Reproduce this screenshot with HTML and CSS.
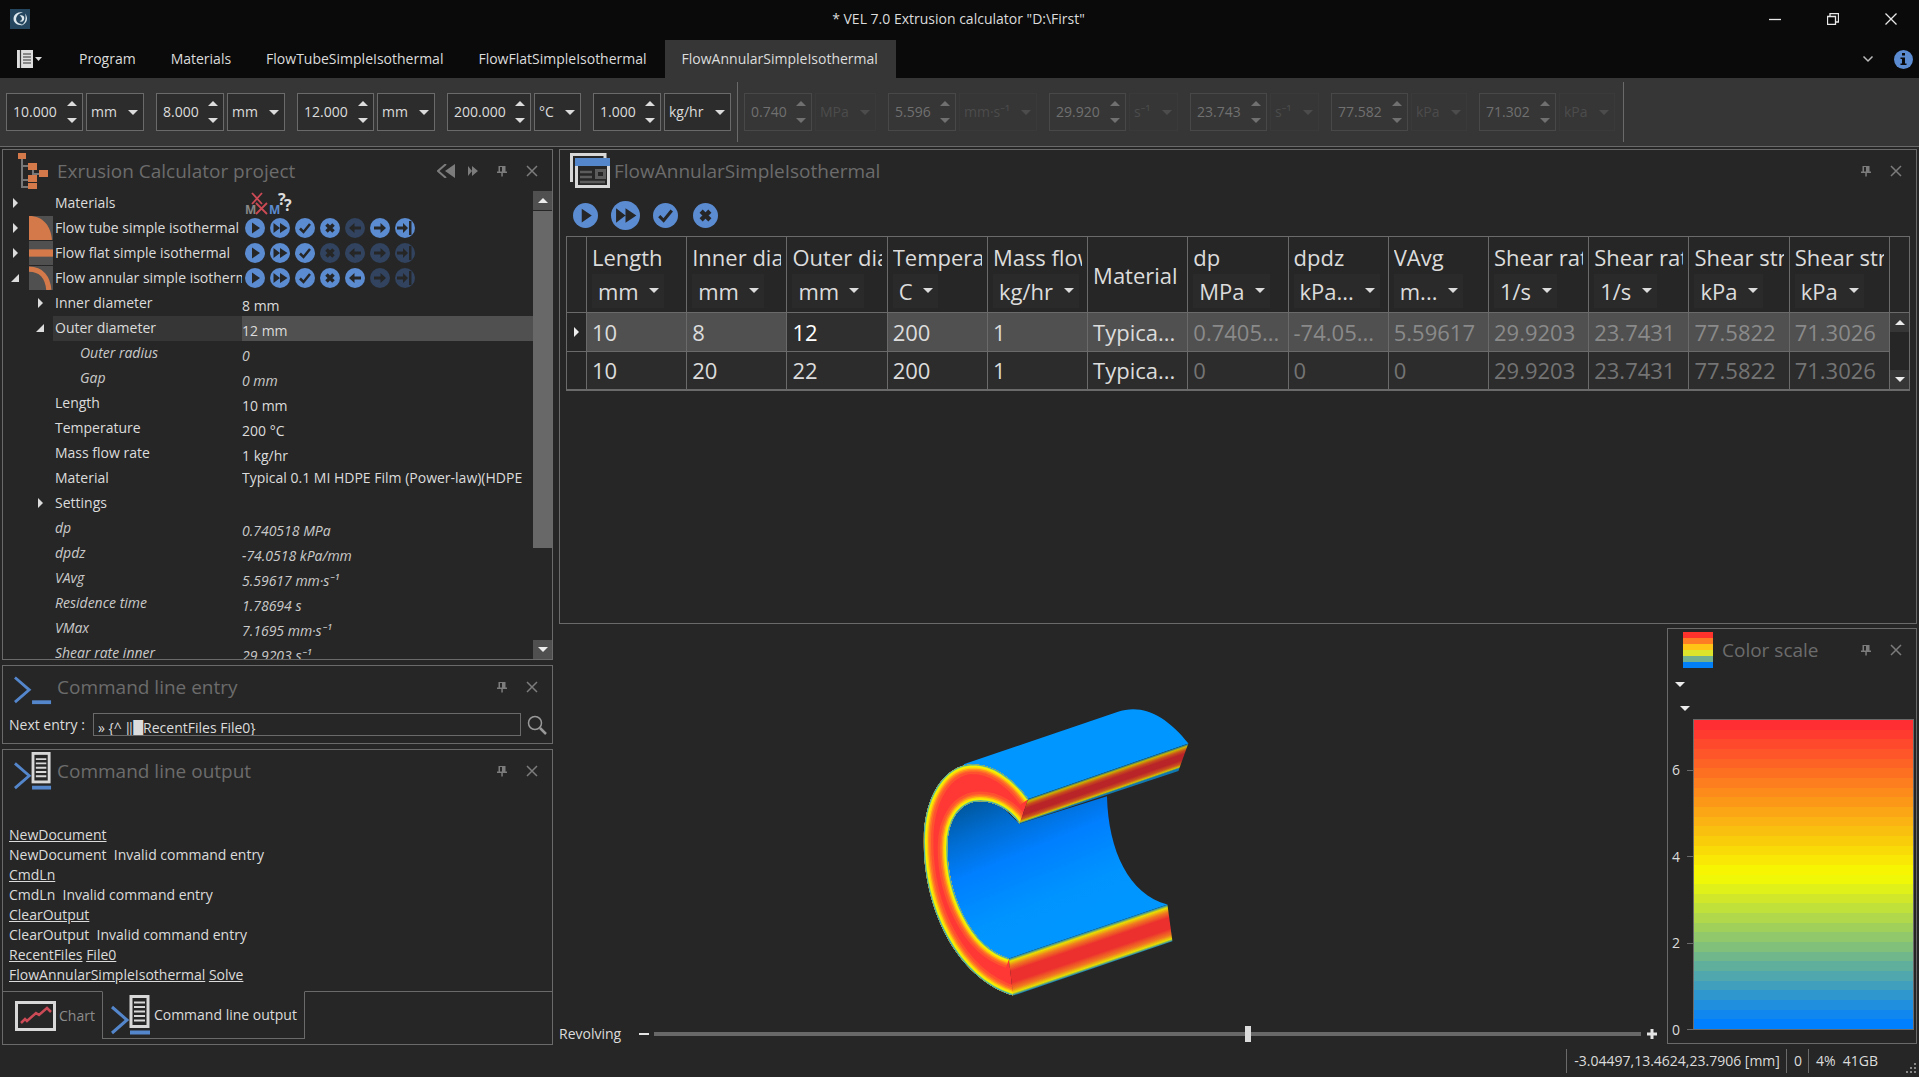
FILE: index.html
```html
<!DOCTYPE html>
<html lang="en">
<head>
  <meta charset="UTF-8">
  <meta name="viewport" content="width=device-width, initial-scale=1.0">
  <title>VEL 7.0 Extrusion calculator</title>
  <link rel="stylesheet" href="styles.css">
</head>
<body>
  <!-- Shared icons -->
  <svg class="defs" width="0" height="0">
    <symbol id="i-play" viewBox="0 0 20 20"><circle cx="10" cy="10" r="10"/><path class="ink" d="M7 4.500l8 5.500-8 5.500z"/></symbol>
    <symbol id="i-ff" viewBox="0 0 20 20"><circle cx="10" cy="10" r="10"/><path class="ink" d="M3.500 5l6.500 5-6.500 5zM10 5l7.500 5-7.500 5z"/></symbol>
    <symbol id="i-check" viewBox="0 0 20 20"><circle cx="10" cy="10" r="10"/><path class="pen" d="M5 10.500l3.500 3.500 6.500-8"/></symbol>
    <symbol id="i-cross" viewBox="0 0 20 20"><circle cx="10" cy="10" r="10"/><path class="pen wide" d="M6.500 6.500l7 7M13.500 6.500l-7 7"/></symbol>
    <symbol id="i-left" viewBox="0 0 20 20"><circle cx="10" cy="10" r="10"/><path class="ink" d="M4 10l5.500-5v3.500H16v3H9.500V15z"/></symbol>
    <symbol id="i-right" viewBox="0 0 20 20"><circle cx="10" cy="10" r="10"/><path class="ink" d="M16 10l-5.500-5v3.500H4v3h6.500V15z"/></symbol>
    <symbol id="i-end" viewBox="0 0 20 20"><circle cx="10" cy="10" r="10"/><path class="ink" d="M13 10L8 5v3.500H2v3h6V15zM14 3h2.500v14H14z"/></symbol>
    <symbol id="i-pin" viewBox="0 0 12 12"><path d="M2.500 1h7v5.500h1.500V8H6.800v3.500H5.300V8H1V6.500h1.500zM4 2v4.500h2V2z" fill-rule="evenodd"/></symbol>
    <symbol id="i-close" viewBox="0 0 12 12"><path d="M1 1l10 10M11 1L1 11" fill="none" stroke="currentColor" stroke-width="1.500"/></symbol>
    <symbol id="i-output" viewBox="0 0 40 40">
      <path d="M1 12l15 13L1 38" fill="none" stroke="#5486cc" stroke-width="3"/>
      <rect x="20" y="1.500" width="17" height="30" fill="none" stroke="#d8d8d8" stroke-width="3"/>
      <path d="M23 7.500h11M23 12h11M23 16.500h11M23 21h11M23 25.500h11" stroke="#d8d8d8" stroke-width="2"/>
      <path d="M19 37.500h20" stroke="#5486cc" stroke-width="4"/>
    </symbol>
  </svg>

  <header class="titlebar">
    <svg class="app-icon" viewBox="0 0 20 20">
      <rect width="20" height="20" fill="#24465e"/>
      <path d="M13 3.500C6 1.500 1.500 8 4.500 13c2 3 6 4 8 2-5 .5-8-4-5.500-8 1-2 3-3 6-3.500z" fill="#dce8ee"/>
      <path d="M15 4.500c4 4.500 2 11-5 12.500 5.500-2.500 6.500-7.500 5-12.500zM9.500 6.500c4-1.500 6 2 4 5-1 1.500-3 1.500-4 .5 3 0 3.500-3.500 0-5.500z" fill="#dce8ee"/>
    </svg>
    <h1>* VEL 7.0 Extrusion calculator "D:\First"</h1>
    <div class="window-buttons">
      <button type="button" aria-label="Minimize"><svg viewBox="0 0 12 12"><path d="M0 6.500h12"/></svg></button>
      <button type="button" aria-label="Restore"><svg viewBox="0 0 12 12"><path d="M.5 3.500h8v8h-8zM3 3V.500h8.500V9H9"/></svg></button>
      <button type="button" aria-label="Close"><svg viewBox="0 0 12 12"><path d="M.5.500l11 11M11.500.500l-11 11"/></svg></button>
    </div>
  </header>

  <nav class="tabs">
    <button type="button" class="file-menu" aria-label="File">
      <svg width="26" height="18" viewBox="0 0 26 18"><path d="M0 0h16v18H0z" fill="#ddd"/><path d="M3.500 0v18M6 4h8M6 7h8M6 10h8M6 13h8" stroke="#333" stroke-width="1.200"/><path d="M18 7h7l-3.500 4z" fill="#ddd"/></svg>
    </button>
    <a href="#">Program</a>
    <a href="#">Materials</a>
    <a href="#">FlowTubeSimpleIsothermal</a>
    <a href="#">FlowFlatSimpleIsothermal</a>
    <a href="#" class="active">FlowAnnularSimpleIsothermal</a>
    <div class="tabs-end">
      <svg width="12" height="8" viewBox="0 0 12 8"><path d="M1.500 1.500L6 6l4.500-4.500" fill="none" stroke="#bbb" stroke-width="1.500"/></svg>
      <svg width="19" height="19" viewBox="0 0 19 19"><circle cx="9.500" cy="9.500" r="9.500" fill="#5b8bd0"/><path d="M8 3h3v2.500H8zM6.500 7.500H11v6h1.500V15h-6v-1.500H8V9H6.500z" fill="#0a0a0a"/></svg>
    </div>
  </nav>

  <div class="toolbar">
    <div class="tool-group">
      <div class="field"><span class="spin"><input type="text" value="10.000" aria-label="Length"><i></i></span><span class="unit"><select aria-label="Length unit"><option>mm</option></select></span></div>
      <div class="field"><span class="spin short"><input type="text" value="8.000" aria-label="Inner diameter"><i></i></span><span class="unit"><select aria-label="Inner diameter unit"><option>mm</option></select></span></div>
      <div class="field"><span class="spin"><input type="text" value="12.000" aria-label="Outer diameter"><i></i></span><span class="unit"><select aria-label="Outer diameter unit"><option>mm</option></select></span></div>
      <div class="field"><span class="spin long"><input type="text" value="200.000" aria-label="Temperature"><i></i></span><span class="unit"><select aria-label="Temperature unit"><option>°C</option></select></span></div>
      <div class="field"><span class="spin short"><input type="text" value="1.000" aria-label="Mass flow rate"><i></i></span><span class="unit"><select aria-label="Mass flow rate unit"><option>kg/hr</option></select></span></div>
    </div>
    <div class="tool-group results">
      <div class="field"><span class="spin short"><input type="text" value="0.740" aria-label="dp" disabled><i></i></span><span class="unit"><select aria-label="dp unit" disabled><option>MPa</option></select></span></div>
      <div class="field"><span class="spin short"><input type="text" value="5.596" aria-label="VAvg" disabled><i></i></span><span class="unit"><select aria-label="VAvg unit" disabled><option>mm·s⁻¹</option></select></span></div>
      <div class="field"><span class="spin"><input type="text" value="29.920" aria-label="Shear rate inner" disabled><i></i></span><span class="unit"><select aria-label="Shear rate inner unit" disabled><option>s⁻¹</option></select></span></div>
      <div class="field"><span class="spin"><input type="text" value="23.743" aria-label="Shear rate outer" disabled><i></i></span><span class="unit"><select aria-label="Shear rate outer unit" disabled><option>s⁻¹</option></select></span></div>
      <div class="field"><span class="spin"><input type="text" value="77.582" aria-label="Shear stress inner" disabled><i></i></span><span class="unit"><select aria-label="Shear stress inner unit" disabled><option>kPa</option></select></span></div>
      <div class="field"><span class="spin"><input type="text" value="71.302" aria-label="Shear stress outer" disabled><i></i></span><span class="unit"><select aria-label="Shear stress outer unit" disabled><option>kPa</option></select></span></div>
    </div>
  </div>

  <main class="workspace">
    <div class="left">
      <section class="panel project">
        <div class="panel-head">
          <svg class="head-icon" viewBox="0 0 40 38">
            <path d="M9 7v28h10M9 14h9M9 28h9M20 15v7h12" fill="none" stroke="#777" stroke-width="2"/>
            <path d="M5 1h8v6H5zM15 11h9v7h-9zM26 18h9v7h-9zM15 23h9v7h-9zM15 31h9v6h-9z" fill="#d47a4a"/>
          </svg>
          <h2>Exrusion Calculator project</h2>
          <svg class="skip" width="18" height="14" viewBox="0 0 18 14"><path d="M18 0v14L8 7z"/><path d="M9 0L1 7l8 7" fill="none" stroke="currentColor" stroke-width="2"/></svg>
          <svg class="skip next" width="10" height="10" viewBox="0 0 10 10"><path d="M0 0l4 5-4 5zM4 0l6 5-6 5z"/></svg>
          <button type="button" aria-label="Pin"><svg><use href="#i-pin"/></svg></button>
          <button type="button" aria-label="Close"><svg><use href="#i-close"/></svg></button>
        </div>
        <div class="tree-wrap">
          <div class="tree">
            <div class="row closed"><span>Materials</span>
              <b class="actions"><svg class="marks" width="50" height="25" viewBox="0 0 50 25">
                <text x="0" y="23" fill="#888" class="letter">M</text><path d="M7 2l10 11M17 2L7 13M11 12l11 11M22 12L11 23" stroke="#cc4a55" stroke-width="1.800"/>
                <text x="24" y="23" fill="#5b8bd0" class="letter">M</text><text x="33" y="14" fill="#ddd" class="query">?</text><text x="39" y="20" fill="#ddd" class="query">?</text>
              </svg></b></div>
            <div class="row closed"><svg class="thumb" viewBox="0 0 23 23"><rect width="23" height="23" fill="#505050"/><path d="M0 0c14 0 21 10 22 23H0z" fill="#d47a4a"/></svg><span>Flow tube simple isothermal</span>
              <b class="actions"><button aria-label="Solve"><svg><use href="#i-play"/></svg></button><button aria-label="Solve all"><svg><use href="#i-ff"/></svg></button><button aria-label="Accept"><svg><use href="#i-check"/></svg></button><button aria-label="Remove"><svg><use href="#i-cross"/></svg></button><button aria-label="Previous" disabled><svg><use href="#i-left"/></svg></button><button aria-label="Next"><svg><use href="#i-right"/></svg></button><button aria-label="Last"><svg><use href="#i-end"/></svg></button></b></div>
            <div class="row closed"><svg class="thumb" viewBox="0 0 23 23"><rect width="23" height="23" fill="#505050"/><path d="M0 8h23v7H0z" fill="#d47a4a"/></svg><span>Flow flat simple isothermal</span>
              <b class="actions"><button aria-label="Solve"><svg><use href="#i-play"/></svg></button><button aria-label="Solve all"><svg><use href="#i-ff"/></svg></button><button aria-label="Accept"><svg><use href="#i-check"/></svg></button><button aria-label="Remove" disabled><svg><use href="#i-cross"/></svg></button><button aria-label="Previous" disabled><svg><use href="#i-left"/></svg></button><button aria-label="Next" disabled><svg><use href="#i-right"/></svg></button><button aria-label="Last" disabled><svg><use href="#i-end"/></svg></button></b></div>
            <div class="row open"><svg class="thumb" viewBox="0 0 23 23"><rect width="23" height="23" fill="#505050"/><path d="M0 3c12 0 18 8 19 20" fill="none" stroke="#d47a4a" stroke-width="5"/></svg><span>Flow annular simple isothermal</span>
              <b class="actions"><button aria-label="Solve"><svg><use href="#i-play"/></svg></button><button aria-label="Solve all"><svg><use href="#i-ff"/></svg></button><button aria-label="Accept"><svg><use href="#i-check"/></svg></button><button aria-label="Remove"><svg><use href="#i-cross"/></svg></button><button aria-label="Previous"><svg><use href="#i-left"/></svg></button><button aria-label="Next" disabled><svg><use href="#i-right"/></svg></button><button aria-label="Last" disabled><svg><use href="#i-end"/></svg></button></b></div>
            <div class="row closed level1"><span>Inner diameter</span><b>8 mm</b></div>
            <div class="row open level1 selected"><span>Outer diameter</span><b>12 mm</b></div>
            <div class="row level2 calc"><span>Outer radius</span><b>0</b></div>
            <div class="row level2 calc"><span>Gap</span><b>0 mm</b></div>
            <div class="row"><span>Length</span><b>10 mm</b></div>
            <div class="row"><span>Temperature</span><b>200 °C</b></div>
            <div class="row"><span>Mass flow rate</span><b>1 kg/hr</b></div>
            <div class="row"><span>Material</span><b class="plain">Typical 0.1 MI HDPE Film (Power-law)(HDPE</b></div>
            <div class="row closed level1"><span>Settings</span></div>
            <div class="row calc"><span>dp</span><b>0.740518 MPa</b></div>
            <div class="row calc"><span>dpdz</span><b>-74.0518 kPa/mm</b></div>
            <div class="row calc"><span>VAvg</span><b>5.59617 mm·s⁻¹</b></div>
            <div class="row calc"><span>Residence time</span><b>1.78694 s</b></div>
            <div class="row calc"><span>VMax</span><b>7.1695 mm·s⁻¹</b></div>
            <div class="row calc"><span>Shear rate inner</span><b>29.9203 s⁻¹</b></div>
          </div>
          <div class="scrollbar">
            <button type="button" class="up" aria-label="Scroll up"></button>
            <div class="scroll-thumb"></div>
            <button type="button" class="down" aria-label="Scroll down"></button>
          </div>
        </div>
      </section>

      <section class="panel entry">
        <div class="panel-head">
          <svg class="head-icon" viewBox="0 0 40 40"><path d="M1 10l15 13L1 36" fill="none" stroke="#5486cc" stroke-width="3"/><path d="M19 36h20" stroke="#5486cc" stroke-width="4"/></svg>
          <h2>Command line entry</h2>
          <button type="button" aria-label="Pin"><svg><use href="#i-pin"/></svg></button>
          <button type="button" aria-label="Close"><svg><use href="#i-close"/></svg></button>
        </div>
        <form class="entry-form">
          <label for="nextEntry">Next entry :</label>
          <input type="text" id="nextEntry" value="» {^ ‖█RecentFiles File0}">
          <button type="button" aria-label="Search"><svg width="20" height="20" viewBox="0 0 20 20"><circle cx="8" cy="8" r="6.500" fill="none" stroke="#999" stroke-width="1.500"/><path d="M13 13l6 6" stroke="#999" stroke-width="2.500"/></svg></button>
        </form>
      </section>

      <section class="panel output">
        <div class="panel-head">
          <svg class="head-icon" viewBox="0 0 40 40"><use href="#i-output"/></svg>
          <h2>Command line output</h2>
          <button type="button" aria-label="Pin"><svg><use href="#i-pin"/></svg></button>
          <button type="button" aria-label="Close"><svg><use href="#i-close"/></svg></button>
        </div>
        <div class="log">
          <p><a href="#">NewDocument</a></p>
          <p>NewDocument&nbsp; Invalid command entry</p>
          <p><a href="#">CmdLn</a></p>
          <p>CmdLn&nbsp; Invalid command entry</p>
          <p><a href="#">ClearOutput</a></p>
          <p>ClearOutput&nbsp; Invalid command entry</p>
          <p><a href="#">RecentFiles</a> <a href="#">File0</a></p>
          <p><a href="#">FlowAnnularSimpleIsothermal</a> <a href="#">Solve</a></p>
        </div>
        <div class="dock-tabs">
          <button type="button" class="dock-tab">
            <svg width="41" height="30" viewBox="0 0 41 30"><rect x="1.500" y="1.500" width="38" height="27" fill="none" stroke="#d8d8d8" stroke-width="3"/><path d="M6 22l4-4 2 2 9-8 3 2 8-7 4 4" fill="none" stroke="#cc4a55" stroke-width="2.500"/></svg>
            Chart
          </button>
          <button type="button" class="dock-tab active">
            <svg width="40" height="40"><use href="#i-output"/></svg>
            Command line output
          </button>
          <div class="dock-rest"></div>
        </div>
      </section>
    </div>

    <div class="right">
      <section class="panel flow">
        <div class="panel-head">
          <svg class="head-icon" viewBox="0 0 40 36">
            <path d="M1.500 29V1.500H35V6" fill="none" stroke="#d8d8d8" stroke-width="3"/>
            <path d="M6.500 8v25.500h32V8" fill="none" stroke="#d8d8d8" stroke-width="3"/>
            <path d="M5 5h35v8H5z" fill="#5486cc"/>
            <path d="M10 19h12M10 24h12M10 29h25" stroke="#5c5c5c" stroke-width="2.500"/><rect x="26.500" y="17.500" width="8" height="7" fill="none" stroke="#5c5c5c" stroke-width="3"/>
          </svg>
          <h2>FlowAnnularSimpleIsothermal</h2>
          <button type="button" aria-label="Pin"><svg><use href="#i-pin"/></svg></button>
          <button type="button" aria-label="Close"><svg><use href="#i-close"/></svg></button>
        </div>
        <div class="flow-actions">
          <button aria-label="Solve"><svg><use href="#i-play"/></svg></button>
          <button class="big" aria-label="Solve all"><svg><use href="#i-ff"/></svg></button>
          <button aria-label="Accept"><svg><use href="#i-check"/></svg></button>
          <button aria-label="Remove"><svg><use href="#i-cross"/></svg></button>
        </div>
        <table>
          <colgroup><col class="marker-col"><col span="13"><col class="scroll-col"></colgroup>
          <thead>
            <tr>
              <th></th>
              <th><span>Length</span><div class="unit"><select aria-label="Unit"><option>mm</option></select></div></th>
              <th><span>Inner diameter</span><div class="unit"><select aria-label="Unit"><option>mm</option></select></div></th>
              <th><span>Outer diameter</span><div class="unit"><select aria-label="Unit"><option>mm</option></select></div></th>
              <th><span>Temperature</span><div class="unit"><select aria-label="Unit"><option>C</option></select></div></th>
              <th><span>Mass flow rate</span><div class="unit"><select aria-label="Unit"><option>kg/hr</option></select></div></th>
              <th><span>Material</span></th>
              <th><span>dp</span><div class="unit"><select aria-label="Unit"><option>MPa</option></select></div></th>
              <th><span>dpdz</span><div class="unit"><select aria-label="Unit"><option>kPa...</option></select></div></th>
              <th><span>VAvg</span><div class="unit"><select aria-label="Unit"><option>m...</option></select></div></th>
              <th><span>Shear rate inner</span><div class="unit"><select aria-label="Unit"><option>1/s</option></select></div></th>
              <th><span>Shear rate outer</span><div class="unit"><select aria-label="Unit"><option>1/s</option></select></div></th>
              <th><span>Shear stress inner</span><div class="unit"><select aria-label="Unit"><option>kPa</option></select></div></th>
              <th><span>Shear stress outer</span><div class="unit"><select aria-label="Unit"><option>kPa</option></select></div></th>
              <th></th>
            </tr>
          </thead>
          <tbody>
            <tr class="current">
              <td class="marker"></td><td>10</td><td>8</td><td class="editing">12</td><td>200</td><td>1</td><td>Typica...</td>
              <td class="ro">0.7405...</td><td class="ro">-74.05...</td><td class="ro">5.59617</td><td class="ro">29.9203</td><td class="ro">23.7431</td><td class="ro">77.5822</td><td class="ro">71.3026</td>
              <td class="table-scroll" rowspan="2"><div><button type="button" class="up" aria-label="Scroll up"></button><button type="button" class="down" aria-label="Scroll down"></button></div></td>
            </tr>
            <tr>
              <td class="marker"></td><td>10</td><td>20</td><td>22</td><td>200</td><td>1</td><td>Typica...</td>
              <td class="ro">0</td><td class="ro">0</td><td class="ro">0</td><td class="ro">29.9203</td><td class="ro">23.7431</td><td class="ro">77.5822</td><td class="ro">71.3026</td>
            </tr>
          </tbody>
        </table>
      </section>

      <div class="view-row">
        <section class="viewport">
          <svg class="scene" viewBox="0 0 1100 384">
            <defs>
              <linearGradient id="bore" gradientUnits="userSpaceOnUse" x1="230" y1="330" x2="400" y2="740">
                <stop offset="0" stop-color="#0058a0"/><stop offset=".2" stop-color="#006cd0"/><stop offset=".45" stop-color="#007fff"/><stop offset=".8" stop-color="#0094ff"/><stop offset="1" stop-color="#0096ff"/>
              </linearGradient>
              <linearGradient id="cutTop" gradientUnits="userSpaceOnUse" x1="388" y1="324" x2="408" y2="382">
                <stop offset="0" stop-color="#0a6ca0"/><stop offset=".1" stop-color="#c8b400"/><stop offset=".25" stop-color="#c84c1c"/><stop offset=".4" stop-color="#b82428"/><stop offset=".65" stop-color="#b82428"/><stop offset=".82" stop-color="#cc541c"/><stop offset=".93" stop-color="#d0c000"/><stop offset="1" stop-color="#1078b0"/>
              </linearGradient>
              <linearGradient id="cutBottom" gradientUnits="userSpaceOnUse" x1="330" y1="802" x2="365" y2="905">
                <stop offset="0" stop-color="#1080c0"/><stop offset=".08" stop-color="#e8e000"/><stop offset=".2" stop-color="#f07820"/><stop offset=".35" stop-color="#ec302e"/><stop offset=".65" stop-color="#ec302e"/><stop offset=".82" stop-color="#f07820"/><stop offset=".93" stop-color="#e8e000"/><stop offset="1" stop-color="#1080c0"/>
              </linearGradient>
              <clipPath id="ringClip"><path d="M388 324C340 258 280 220 222 220C135 222 75 320 75 450C75 650 170 858 343 913L330 802C210 765 146 600 146 470C146 385 185 331 245 331C290 331 335 358 362 398Z"/></clipPath>
              <g id="rim">
                <path d="M388 324C340 258 280 220 222 220C135 222 75 320 75 450C75 650 170 858 343 913"/>
                <path d="M330 802C210 765 146 600 146 470C146 385 185 331 245 331C290 331 335 358 362 398"/>
              </g>
            </defs>
            <g transform="translate(339 57) scale(.3333)">
              <path d="M195 220L655 64C730 38 800 74 868 158L388 324L250 300Z" fill="#0096ff"/>
              <path d="M362 398L624 316C628 480 690 610 805 640L330 802L200 760L120 500L180 320L270 310Z" fill="url(#bore)"/>
              <g clip-path="url(#ringClip)" fill="none">
                <rect width="500" height="960" fill="#ff3835"/>
                <use href="#rim" stroke="#ff5030" stroke-width="58"/>
                <use href="#rim" stroke="#ff6e28" stroke-width="44"/>
                <use href="#rim" stroke="#ff961c" stroke-width="34"/>
                <use href="#rim" stroke="#ffcc08" stroke-width="26"/>
                <use href="#rim" stroke="#f4f000" stroke-width="18"/>
                <use href="#rim" stroke="#80cc70" stroke-width="8"/>
                <use href="#rim" stroke="#1890e0" stroke-width="3"/>
              </g>
              <path d="M388 324L868 158L864 168L838 240L362 398Z" fill="url(#cutTop)"/>
              <path d="M330 802L805 640L820 750L343 913Z" fill="url(#cutBottom)"/>
            </g>
          </svg>
          <div class="revolve">
            <label for="revolving">Revolving</label>
            <span class="minus"></span>
            <input type="range" id="revolving" min="0" max="1000" value="602">
            <span class="plus"></span>
          </div>
        </section>

        <section class="panel scale">
          <div class="panel-head">
            <svg class="head-icon" viewBox="0 0 30 36"><path d="M0 0h30v6H0z" fill="#ff332c"/><path d="M0 6h30v6H0z" fill="#fd7c24"/><path d="M0 12h30v6H0z" fill="#ffc416"/><path d="M0 18h30v6H0z" fill="#dce42c"/><path d="M0 24h30v6H0z" fill="#70b090"/><path d="M0 30h30v6H0z" fill="#007ff8"/></svg>
            <h2>Color scale</h2>
            <button type="button" aria-label="Pin"><svg><use href="#i-pin"/></svg></button>
            <button type="button" aria-label="Close"><svg><use href="#i-close"/></svg></button>
          </div>
          <div class="scale-menus"><button type="button" class="down" aria-label="Field"></button><button type="button" class="down" aria-label="Unit"></button></div>
          <div class="scale-body">
            <div class="ticks"><span>6</span><span>4</span><span>2</span><span>0</span></div>
            <div class="bands" id="bands"></div>
          </div>
        </section>
      </div>
    </div>
  </main>

  <footer class="status">
    <span>-3.04497,13.4624,23.7906 [mm]</span>
    <span>0</span>
    <span>4%&nbsp; 41GB</span>
    <svg class="grip" width="10" height="10" viewBox="0 0 10 10"><path d="M8 0h2v2H8zM4 4h2v2H4zM8 4h2v2H8zM0 8h2v2H0zM4 8h2v2H4zM8 8h2v2H8z" fill="#888"/></svg>
  </footer>

  <script>
    // Color bands, red (max) to yellow to blue (0)
    const stops = [[255, 46, 50], [248, 252, 0], [0, 127, 255]];
    const count = 32;
    const bands = document.getElementById('bands');
    for (let i = 0; i < count; i++) {
      const t = i / (count - 1) * 2;
      const k = Math.min(Math.floor(t), 1);
      const rgb = stops[k].map((c, n) => Math.round(c + (stops[k + 1][n] - c) * (t - k)));
      const band = document.createElement('div');
      band.style.backgroundColor = `rgb(${rgb.join(',')})`;
      bands.appendChild(band);
    }
  </script>
</body>
</html>
```

FILE: styles.css
```css
* {
  box-sizing: border-box;
}

body {
  margin: 0;
  height: 100vh;
  display: flex;
  flex-direction: column;
  overflow: hidden;
  background-color: #262626;
  color: #dcdcdc;
  font-family: "Open Sans", "Noto Sans", sans-serif;
  font-size: 14px;
  line-height: 20px;
}

button,
input,
select {
  font: inherit;
  color: inherit;
  margin: 0;
  padding: 0;
  border: none;
  background: none;
}

select {
  appearance: none;
}

h1,
h2,
p {
  margin: 0;
  font-weight: normal;
}

svg {
  display: block;
  flex: none;
}

.defs {
  position: absolute;
}

.ink {
  fill: #262626;
}

.pen {
  fill: none;
  stroke: #262626;
  stroke-width: 2.5;
}

.wide {
  stroke-width: 3.5;
}

/* Title bar */
.titlebar {
  display: grid;
  grid-template-columns: 1fr auto 1fr;
  align-items: center;
  height: 40px;
  padding: 0 12px 3px 10px;
  background-color: #0a0a0a;
}

.titlebar h1 {
  font-size: 14px;
}

.app-icon {
  width: 20px;
  height: 20px;
}

.window-buttons {
  display: flex;
  justify-content: flex-end;
  gap: 46px;
  padding-right: 10px;
}

.window-buttons svg {
  width: 12px;
  height: 12px;
  fill: none;
  stroke: #e8e8e8;
  stroke-width: 1.3;
}

/* Ribbon tabs */
.tabs {
  display: flex;
  height: 38px;
  background-color: #0a0a0a;
}

.tabs a {
  padding: 9px 18px 9px 17px;
  color: #dcdcdc;
  text-decoration: none;
}

.tabs a.active {
  background-color: #363636;
}

.file-menu {
  width: 62px;
  padding-left: 17px;
}

.tabs-end {
  display: flex;
  align-items: center;
  gap: 20px;
  margin-left: auto;
  padding-right: 6px;
}

/* Ribbon fields */
.toolbar {
  display: flex;
  height: 69px;
  padding: 4px 0;
  background-color: #363636;
  border-bottom: 1px solid #6a6a6a;
}

.tool-group {
  display: flex;
  align-items: flex-start;
  gap: 12px;
  padding: 11px 6px 0;
  border-right: 1px solid #6a6a6a;
}

.tool-group.results {
  padding-right: 8px;
  color: #707070;
}

.field {
  display: flex;
  gap: 3px;
}

.field .spin,
.field .unit {
  height: 38px;
  border: 1px solid #6a6a6a;
  background-color: #2c2c2c;
}

.spin {
  display: flex;
  align-items: center;
  width: 77px;
  padding: 0 5px 0 6px;
}

.spin.short {
  width: 68px;
}

.spin.long {
  width: 84px;
}

.spin input {
  flex: 1;
  min-width: 0;
}

.spin i {
  display: flex;
  flex-direction: column;
  gap: 12px;
}

.spin i::before,
.spin i::after {
  content: "";
  border: 5px solid transparent;
  border-top-width: 0;
  border-bottom-color: #dcdcdc;
}

.spin i::after {
  border-width: 5px 5px 0;
  border-top-color: #dcdcdc;
}

.unit {
  position: relative;
}

.unit::after {
  content: "";
  position: absolute;
  right: 5px;
  top: 16px;
  border: 5px solid transparent;
  border-bottom-width: 0;
  border-top-color: #dcdcdc;
  pointer-events: none;
}

.field .unit select {
  height: 36px;
  padding: 0 26px 0 4px;
}

.results .spin {
  border-color: #484848;
  background-color: #363636;
}

.results .unit {
  border-color: #3a3a3a;
  background-color: #363636;
}

.results input,
.results select {
  opacity: 1;
}

.results select {
  color: #4c4c4c;
}

.results .spin i::before {
  border-bottom-color: #707070;
}

.results .spin i::after {
  border-top-color: #707070;
}

.results .unit::after {
  border-top-color: #4c4c4c;
}

/* Panels */
.workspace {
  flex: 1;
  min-height: 0;
  display: grid;
  grid-template-columns: 551px minmax(0, 1fr);
  gap: 6px;
  padding: 2px 2px 0;
}

.left {
  display: flex;
  flex-direction: column;
  gap: 5px;
  min-height: 0;
}

.right {
  display: flex;
  flex-direction: column;
  gap: 4px;
  min-width: 0;
}

.panel {
  border: 1px solid #6a6a6a;
}

.panel-head {
  display: flex;
  align-items: center;
  height: 41px;
  padding: 0 14px 0 10px;
  color: #7c7c7c;
  fill: #7c7c7c;
}

.panel-head h2 {
  flex: 1;
  padding-left: 4px;
  color: #6c6c6c;
  font-size: 19px;
  line-height: 28px;
}

.head-icon {
  width: 40px;
  height: 38px;
}

.panel-head button {
  margin-left: 18px;
}

.panel-head button svg {
  width: 12px;
  height: 12px;
}

.skip.next {
  margin: 0 0 0 13px;
}

/* Project tree */
.project {
  flex: 1;
  min-height: 0;
  display: flex;
  flex-direction: column;
}

.tree-wrap {
  flex: 1;
  min-height: 0;
  display: flex;
}

.tree {
  flex: 1;
  min-width: 0;
  overflow: hidden;
}

.row {
  position: relative;
  display: flex;
  height: 25px;
  padding-left: 50px;
  white-space: nowrap;
}

.row span {
  width: 189px;
  padding: 2px 0 0 2px;
  overflow: hidden;
}

.row b {
  flex: 1;
  min-width: 0;
  padding-top: 5px;
  overflow: hidden;
  font-weight: normal;
}

.row b.plain {
  padding-top: 2px;
}

.row b.actions {
  display: flex;
  align-items: flex-start;
  gap: 5px;
  padding: 2px 0 0 3px;
  overflow: visible;
}

.marks {
  overflow: visible;
  margin-top: -2px;
}

.level2 span {
  padding-left: 27px;
}

.calc {
  font-style: italic;
  color: #cacaca;
}

.selected span {
  background-color: #363636;
}

.selected b {
  background-color: #505050;
}

/* Expander arrows and thumbnails sit in the row's left gutter */
.row.closed::before,
.row.open::before {
  content: "";
  position: absolute;
  left: 10px;
  top: 7px;
  border: 5px solid transparent;
  border-right-width: 0;
  border-left-color: #dcdcdc;
}

.row.open::before {
  left: 8px;
  top: 8px;
  border-width: 0 0 8px 8px;
  border-color: transparent transparent #dcdcdc;
}

.row.level1::before {
  margin-left: 25px;
}

.thumb {
  position: absolute;
  left: 26px;
  top: 0;
  width: 24px;
  height: 24px;
}

.actions button,
.flow-actions button {
  fill: #5b8bd0;
}

.actions button:disabled {
  fill: #31435e;
}

.actions button svg {
  width: 20px;
  height: 20px;
}

.letter {
  font-size: 12px;
  font-weight: bold;
}

.query {
  font-size: 16px;
  font-weight: bold;
}

.scrollbar {
  display: flex;
  flex-direction: column;
  width: 19px;
}

.up,
.down {
  display: flex;
  align-items: center;
  justify-content: center;
  width: 19px;
  height: 19px;
}

.scrollbar .up,
.scrollbar .down {
  background-color: #505050;
}

.up::before,
.down::before {
  content: "";
  border: 5px solid transparent;
  border-top-width: 0;
  border-bottom-color: #ececec;
}

.down::before {
  border-width: 5px 5px 0;
  border-top-color: #ececec;
}

.scroll-thumb {
  height: 72%;
  margin: 1px 0 auto;
  background-color: #686868;
}

/* Command line */
.entry-form {
  display: flex;
  align-items: center;
  gap: 6px;
  padding: 6px 5px 7px 6px;
}

.entry-form label {
  width: 78px;
}

.entry-form input {
  flex: 1;
  min-width: 0;
  height: 23px;
  padding: 6px 4px 0;
  border: 1px solid #6a6a6a;
}

.output {
  display: flex;
  flex-direction: column;
}

.log {
  padding: 34px 6px 6px;
}

.log a {
  color: inherit;
}

.dock-tabs {
  display: flex;
  height: 53px;
  padding-bottom: 5px;
}

.dock-tab {
  display: flex;
  align-items: center;
  gap: 3px;
  padding: 0 7px 0 12px;
  border-top: 1px solid #6a6a6a;
  color: #8c8c8c;
}

.dock-tab.active {
  padding-left: 8px;
  border: 1px solid #6a6a6a;
  border-top-color: transparent;
  color: #dcdcdc;
}

.dock-rest {
  flex: 1;
  border-top: 1px solid #6a6a6a;
}

/* Flow table */
.flow {
  height: 475px;
}

.flow .head-icon {
  height: 36px;
}

.flow-actions {
  display: flex;
  align-items: center;
  gap: 15px;
  height: 45px;
  padding: 4px 0 0 13px;
}

.flow-actions svg {
  width: 25px;
  height: 25px;
}

.flow-actions .big {
  margin: 0 -2px;
}

.flow-actions .big svg {
  width: 29px;
  height: 29px;
}

table {
  width: calc(100% - 12px);
  margin-left: 6px;
  table-layout: fixed;
  border-collapse: collapse;
  border-bottom: 2px solid #6a6a6a;
  font-size: 22px;
  line-height: 30px;
}

.marker-col,
.scroll-col {
  width: 20px;
}

th,
td {
  padding: 0 5px;
  border: 1px solid #6a6a6a;
  font-weight: normal;
  text-align: left;
  white-space: nowrap;
  overflow: hidden;
}

th {
  height: 76px;
}

th span {
  display: block;
  overflow: hidden;
}

th .unit {
  width: fit-content;
  max-width: 100%;
  margin-top: 2px;
  background-color: #2a2a2a;
}

th .unit::after {
  top: 14px;
  border-width: 5px 5px 0;
}

th select {
  display: block;
  height: 34px;
  max-width: 100%;
  padding: 0 25px 0 6px;
}

td {
  height: 38px;
  background-color: #2c2c2c;
}

.current td {
  background-color: #505050;
}

.current td.editing {
  background-color: #2f2f2f;
  color: #fff;
}

td.ro {
  color: #747474;
}

.current td.ro {
  color: #8a8a8a;
}

.current td.marker,
td.marker {
  background-color: #262626;
}

.current .marker::before {
  content: "";
  display: block;
  width: 0;
  margin-left: 2px;
  border: 5px solid transparent;
  border-right-width: 0;
  border-left-color: #ececec;
}

.current td.table-scroll {
  padding: 0;
  background-color: #262626;
}

.table-scroll div {
  display: flex;
  flex-direction: column;
  justify-content: space-between;
  height: 76px;
}

.table-scroll button {
  background-color: #363636;
}

/* 3D view and color scale */
.view-row {
  flex: 1;
  min-height: 0;
  display: grid;
  grid-template-columns: minmax(0, 1fr) 250px;
  gap: 6px;
  padding-bottom: 1px;
}

.viewport {
  display: flex;
  flex-direction: column;
  min-height: 0;
}

.scene {
  flex: 1;
  width: 100%;
  min-height: 0;
}

.revolve {
  display: flex;
  align-items: center;
  height: 20px;
}

.revolve label {
  width: 80px;
}

.minus,
.plus {
  width: 10px;
  height: 2px;
  background-color: #e4e4e4;
}

.plus {
  height: 10px;
  margin-right: 4px;
  clip-path: polygon(35% 0, 65% 0, 65% 35%, 100% 35%, 100% 65%, 65% 65%, 65% 100%, 35% 100%, 35% 65%, 0 65%, 0 35%, 35% 35%);
}

.revolve input {
  appearance: none;
  flex: 1;
  height: 16px;
  margin: 0 6px 0 5px;
}

.revolve input::-webkit-slider-runnable-track {
  height: 4px;
  background-color: #686868;
}

.revolve input::-webkit-slider-thumb {
  appearance: none;
  width: 6px;
  height: 16px;
  margin-top: -6px;
  background-color: #dcdcdc;
}

.scale {
  display: flex;
  flex-direction: column;
  padding-bottom: 13px;
}

.scale .panel-head {
  padding: 1px 14px 0 15px;
}

.scale .head-icon {
  width: 30px;
  height: 36px;
}

.scale h2 {
  padding-left: 9px;
}

.scale-menus {
  display: flex;
  flex-direction: column;
  gap: 5px;
  padding: 5px 0 1px 2px;
}

.scale-menus .down + .down {
  margin-left: 5px;
}

.scale-body {
  flex: 1;
  display: flex;
  padding-right: 2px;
}

.ticks {
  display: flex;
  flex-direction: column;
  justify-content: space-between;
  width: 25px;
  margin: 41px 0 -10px;
  padding-left: 4px;
}

.ticks span {
  display: flex;
  align-items: center;
  justify-content: space-between;
}

.ticks span::after {
  content: "";
  width: 6px;
  height: 1px;
  background-color: #6a6a6a;
}

.bands {
  flex: 1;
  display: flex;
  flex-direction: column;
  border: 1px solid #6a6a6a;
  overflow: hidden;
}

/* 1px overlap hides the seams between bands */
.bands div {
  flex: 1;
  margin-bottom: -1px;
}

/* Status bar */
.status {
  display: flex;
  align-items: center;
  justify-content: flex-end;
  height: 32px;
  padding-right: 3px;
}

.status span {
  padding: 2px 6px 2px 7px;
  border-left: 1px solid #6a6a6a;
}

.grip {
  margin: 14px 0 0 22px;
}
```
